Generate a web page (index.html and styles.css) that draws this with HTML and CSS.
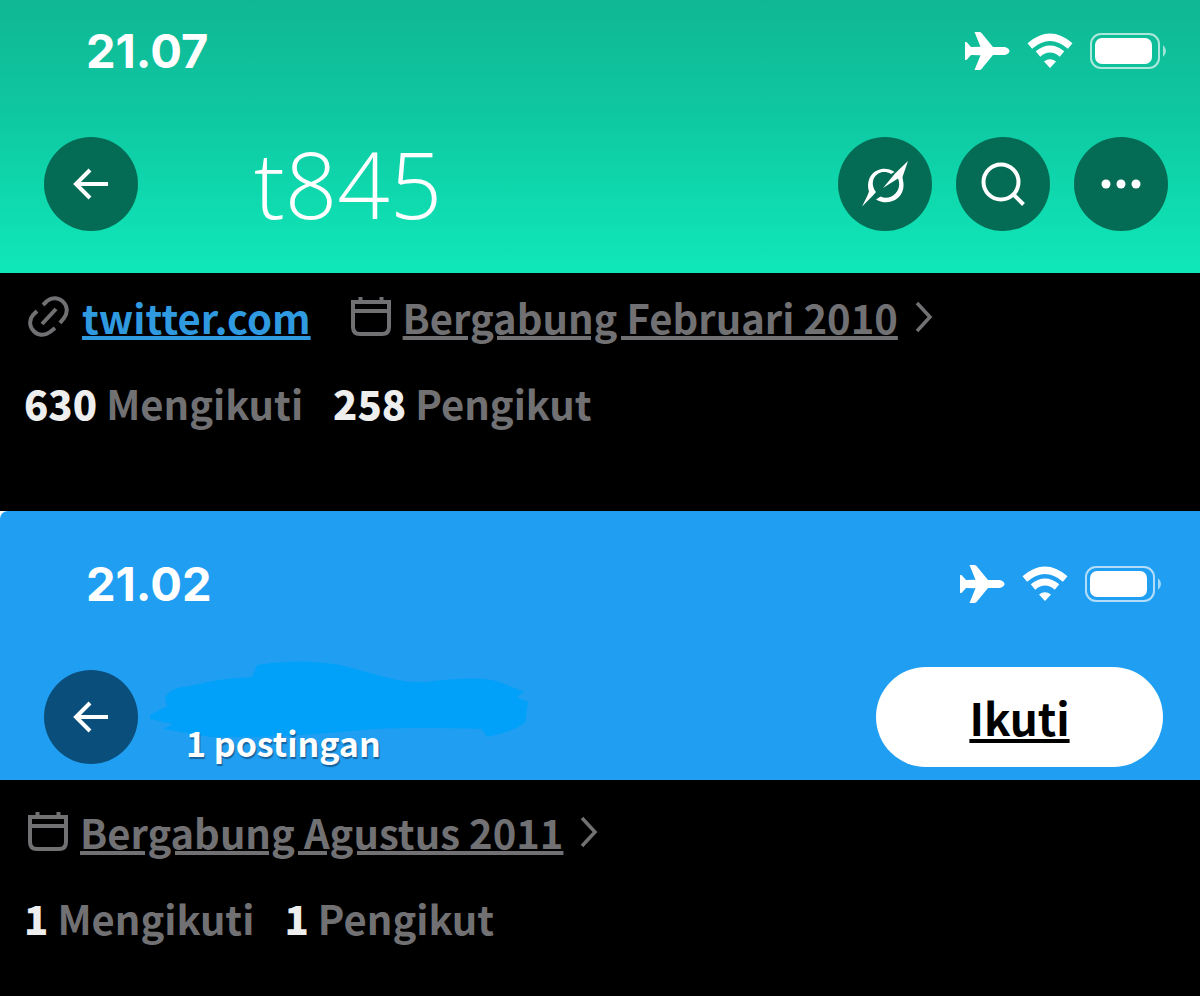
FILE: index.html
```html
<!DOCTYPE html>
<html lang="id">
<head>
<meta charset="UTF-8">
<meta name="viewport" content="width=device-width, initial-scale=1.0">
<title>Profil</title>
<link rel="stylesheet" href="styles.css">
</head>
<body>
<!-- Shared icons -->
<svg class="sprite" aria-hidden="true">
    <symbol id="plane" viewBox="0 0 45 38">
        <path d="M44.500 19c0 2-3 4-6 4H28L16.500 37c-.7.8-1.700 1-2.500 1H9.500l6-14.800-9.500-.2-4 4.500c-.4.5-1 .5-2 .5V10c1 0 1.600 0 2 .5L6 15l9.500-.2L9.500 0H14c.8 0 1.800.2 2.500 1L28 15h10.500c3 0 6 2 6 4z" fill="#fff"/>
    </symbol>
    <symbol id="wifi" viewBox="0 0 46 35">
        <path d="M2.800 12.500Q23-5 43.200 12.500" fill="none" stroke="#fff" stroke-width="7"/>
        <path d="M11 20.500Q23 10.500 35 20.500" fill="none" stroke="#fff" stroke-width="7"/>
        <path d="M17 28Q23 23.500 29 28L23 34.500z" fill="#fff"/>
    </symbol>
    <symbol id="battery" viewBox="0 0 78 36">
        <rect x="1" y="1" width="68" height="34" rx="10" fill="none" stroke="#fff" stroke-width="2" opacity=".65"/>
        <rect x="5" y="5" width="57" height="26" rx="7" fill="#fff"/>
        <path d="M73 12q6 6 0 12z" fill="#fff" opacity=".6"/>
    </symbol>
    <symbol id="back" viewBox="0 0 36 32">
        <path d="M17 2L3 16l14 14M3 16h32" fill="none" stroke="#fff" stroke-width="4"/>
    </symbol>
    <symbol id="calendar" viewBox="0 0 40 40">
        <path d="M2 5h36v25q0 7-7 7H9q-7 0-7-7zM2 14h36M9.500 0v5M30.500 0v5" fill="none" stroke="currentColor" stroke-width="4"/>
    </symbol>
    <symbol id="chevron" viewBox="0 0 20 32">
        <path d="M3 2l13 14L3 30" fill="none" stroke="currentColor" stroke-width="3.500"/>
    </symbol>
</svg>

<section class="profile">
    <header class="header header-green">
        <div class="status">
            <span class="time">21.07</span>
            <div class="status-icons">
                <svg width="45" height="38"><use href="#plane"/></svg>
                <svg width="46" height="36"><use href="#wifi"/></svg>
                <svg width="78" height="36"><use href="#battery"/></svg>
            </div>
        </div>
        <nav class="nav">
            <button class="round" type="button" aria-label="Kembali"><svg width="36" height="32"><use href="#back"/></svg></button>
            <h1 class="name">t845</h1>
            <div class="actions">
                <button class="round" type="button" aria-label="Grok">
                    <svg width="46" height="46" viewBox="0 0 46 46" fill="#fff">
                        <path d="M32.500 11C20 2 2 12 7 30.500L5 35.500 0 45.500l11-11 3-3.500C5 19 17 6 29 13z"/>
                        <path d="M14 38.500c13 8 31-2 27-19L40.500 16 46 0 33 12.500 21 27 36 17.500c5 12-7 23-17.500 18z"/>
                    </svg>
                </button>
                <button class="round" type="button" aria-label="Cari">
                    <svg width="46" height="46" viewBox="0 0 46 46" fill="none" stroke="#fff" stroke-width="4">
                        <circle cx="21" cy="21" r="17.500"/>
                        <path d="M33 33l10.500 10.500"/>
                    </svg>
                </button>
                <button class="round" type="button" aria-label="Lainnya">
                    <svg width="40" height="10" viewBox="0 0 40 10" fill="#fff">
                        <circle cx="5" cy="5" r="4.500"/>
                        <circle cx="20" cy="5" r="4.500"/>
                        <circle cx="35" cy="5" r="4.500"/>
                    </svg>
                </button>
            </div>
        </nav>
    </header>
    <div class="details">
        <div class="meta">
            <svg class="icon" width="42" height="42" viewBox="0 0 42 42" fill="none" stroke="currentColor" stroke-width="4">
                <path d="M15 9l4-4c11-9 26 5 17 17l-4 5M9 15l-4 4c-9 11 5 26 17 17l5-4M14 28l14-15"/>
            </svg>
            <a class="site" href="#">twitter.com</a>
            <svg class="icon" width="40" height="40"><use href="#calendar"/></svg>
            <a href="#">Bergabung Februari 2010</a>
            <svg class="chevron" width="20" height="32"><use href="#chevron"/></svg>
        </div>
        <div class="counts">
            <span><b>630</b> Mengikuti</span>
            <span><b>258</b> Pengikut</span>
        </div>
    </div>
</section>

<section class="profile">
    <div class="corner">
        <header class="header header-blue">
            <div class="status">
                <span class="time">21.02</span>
                <div class="status-icons">
                    <svg width="45" height="38"><use href="#plane"/></svg>
                    <svg width="46" height="36"><use href="#wifi"/></svg>
                    <svg width="78" height="36"><use href="#battery"/></svg>
                </div>
            </div>
            <nav class="nav">
                <button class="round" type="button" aria-label="Kembali"><svg width="36" height="32"><use href="#back"/></svg></button>
                <div class="posts">
                    <svg class="scribble" width="378" height="76" viewBox="0 0 378 76" aria-hidden="true">
                        <path d="M0 54L17 45 15 37Q20 26 40 25Q70 17 102 16L107 4Q150-3 190 4C225 12 245 22 275 21Q330 14 350 21L374 31 367 36 378 41 375 62Q360 72 337 76L332 68Q270 66 225 68Q120 78 60 76L13 68 23 63 0 58z" fill="#02a1f9"/>
                    </svg>
                    <span>1 postingan</span>
                </div>
                <button class="follow" type="button">Ikuti</button>
            </nav>
        </header>
    </div>
    <div class="details details-last">
        <div class="meta">
            <svg class="icon" width="40" height="40"><use href="#calendar"/></svg>
            <a href="#">Bergabung Agustus 2011</a>
            <svg class="chevron" width="20" height="32"><use href="#chevron"/></svg>
        </div>
        <div class="counts">
            <span><b>1</b> Mengikuti</span>
            <span><b>1</b> Pengikut</span>
        </div>
    </div>
</section>
</body>
</html>
```
FILE: styles.css
```css
* {
    box-sizing: border-box;
}
body {
    margin: 0;
    background: #000;
    color: #717174;
    font-family: "Noto Sans CJK JP", "Open Sans", sans-serif;
    font-weight: 700;
}
svg {
    display: block;
    flex: none;
}
button {
    border: 0;
    padding: 0;
    cursor: pointer;
    font: inherit;
}
.sprite {
    position: absolute;
    width: 0;
    height: 0;
}
.header {
    color: #fff;
}
.header-green {
    padding: 23px 32px 39px 44px;
    background: linear-gradient(#10b794, #0ec7a1 40%, #10e8b9);
}
.corner {
    background: #fff;
}
.header-blue {
    padding: 45px 37px 13px 44px;
    background: #209ff2;
    border-top-left-radius: 8px;
}
.status {
    display: flex;
    align-items: center;
    justify-content: space-between;
    height: 56px;
    margin-bottom: 55px;
    padding-left: 42px;
}
.time {
    font-family: Inter, sans-serif;
    font-size: 47px;
    line-height: 56px;
}
.status-icons {
    display: flex;
    align-items: center;
    gap: 17px;
}
.nav {
    display: flex;
    align-items: center;
    min-height: 100px;
}
.round {
    display: flex;
    flex: none;
    align-items: center;
    justify-content: center;
    width: 94px;
    height: 94px;
    border-radius: 50%;
    background: #046c54;
}
.header-blue .round {
    background: #0a4f7b;
}
.name {
    margin: 0 0 0 116px;
    font-family: "Open Sans", sans-serif;
    font-size: 92px;
    font-weight: 300;
    line-height: 100px;
}
.actions {
    display: flex;
    gap: 24px;
    margin-left: auto;
}
.posts {
    position: relative;
    align-self: flex-end;
    margin-left: 48px;
    font-size: 34px;
    line-height: 48px;
    text-shadow: 1px 2px 1px #17629c;
}
.posts span {
    position: relative;
}
.scribble {
    position: absolute;
    left: -36px;
    bottom: 30px;
}
.follow {
    width: 287px;
    height: 100px;
    margin-left: auto;
    border-radius: 50px;
    background: #fff;
    color: #000;
    font-size: 44px;
    text-decoration: underline;
}
.details {
    padding: 14px 24px 78px;
    font-size: 40px;
    line-height: 60px;
}
.details-last {
    padding-top: 22px;
    padding-bottom: 48px;
}
.meta {
    display: flex;
    align-items: center;
    margin-bottom: 26px;
}
.meta a {
    color: inherit;
    text-decoration: underline;
}
.meta .site {
    margin-right: 36px;
    color: #309ae0;
}
.icon {
    margin: 0 12px 0 4px;
}
.chevron {
    margin-left: 16px;
}
.counts {
    display: flex;
    gap: 30px;
}
.counts b {
    color: #eee;
}
```
